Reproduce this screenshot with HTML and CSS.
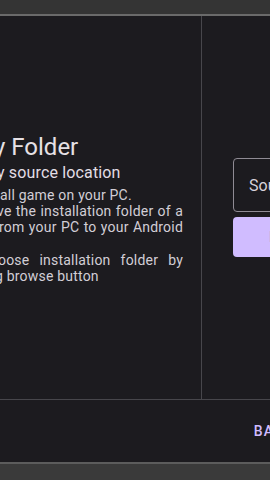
FILE: index.html
```html
<!DOCTYPE html>
<html lang="en">
  <head>
    <meta charset="UTF-8" />
    <meta name="viewport" content="width=device-width, initial-scale=1.0" />
    <title>Copy Folder</title>
    <link rel="stylesheet" href="styles.css">
  </head>
  <body>
    <div class="screen">
      <div class="status-bar"></div>
      <div class="status-edge"></div>
      <div class="main">
        <div class="info">
          <h2 class="info-title">y Folder</h2>
          <p class="info-subtitle">y source location</p>
          <div class="info-text">
            <div class="line">all game on your PC.</div>
            <div class="line justify cut-3">ve the installation folder of a</div>
            <div class="line justify cut-1">rom your PC to your Android</div>
            <div class="line blank"></div>
            <div class="line justify cut-2">oose installation folder by</div>
            <div class="line cut-5">g browse button</div>
          </div>
        </div>
        <div class="form">
          <div class="text-field">Source folder</div>
          <button type="button" class="browse-btn">Browse</button>
        </div>
      </div>
      <div class="footer">
        <button type="button" class="text-btn">Back</button>
        <button type="button" class="text-btn">Next</button>
      </div>
      <div class="nav-edge"></div>
      <div class="nav-bar"></div>
    </div>
  </body>
</html>
```

FILE: styles.css
```css
body {
  margin: 0;
  background-color: #1c1b1f;
  font-family: Roboto, "Noto Sans", sans-serif;
  overflow: hidden;
}

.screen {
  width: 400px;
  height: 480px;
  display: flex;
  flex-direction: column;
}

.status-bar {
  height: 14px;
  background-color: #343434;
}

.status-edge {
  height: 2px;
  background-color: #6a6a6a;
}

.main {
  flex: 1;
  display: flex;
  border-bottom: 1px solid #47464b;
}

.info {
  width: 202px;
  box-sizing: border-box;
  border-right: 1px solid #47464b;
  padding: 117px 18px 0 0;
}

.info-title {
  margin: 0 0 0 -6px;
  font-size: 24px;
  font-weight: 400;
  line-height: 28px;
  color: #e6e1e5;
}

.info-subtitle {
  margin: 2px 0 4px -3px;
  font-size: 16px;
  line-height: 20px;
  letter-spacing: 0.15px;
  color: #e2dee5;
}

.info-text {
  font-size: 14px;
  line-height: 16.2px;
  letter-spacing: 0.2px;
  color: #d2ced6;
}

.line {
  height: 16.2px;
  white-space: nowrap;
}

.line.justify {
  text-align: justify;
  text-align-last: justify;
  white-space: normal;
}

.cut-1 { margin-left: -1px; }
.cut-2 { margin-left: -2px; }
.cut-3 { margin-left: -3px; }
.cut-5 { margin-left: -5px; }

.form {
  flex: 1;
  padding: 0 31px;
  display: flex;
  flex-direction: column;
  justify-content: center;
  gap: 5px;
}

.text-field {
  height: 54px;
  box-sizing: border-box;
  border: 1px solid #8f8b94;
  border-radius: 4px;
  padding: 0 15px;
  display: flex;
  align-items: center;
  font-size: 16px;
  color: #d6d2da;
}

.browse-btn {
  height: 40px;
  border: none;
  border-radius: 4px;
  background-color: #d0bcff;
  color: #381e72;
  font-family: Roboto, sans-serif;
  font-size: 14px;
  font-weight: 500;
  text-transform: uppercase;
  letter-spacing: 1.25px;
}

.footer {
  height: 62px;
  display: flex;
  justify-content: flex-end;
  align-items: center;
  gap: 8px;
  padding-right: 21px;
}

.text-btn {
  background: none;
  border: none;
  padding: 8px 12px;
  color: #d0bcff;
  font-family: Roboto, sans-serif;
  font-size: 14px;
  font-weight: 500;
  text-transform: uppercase;
  letter-spacing: 1.25px;
}

.nav-edge {
  height: 2px;
  background-color: #5c5c5c;
}

.nav-bar {
  height: 16px;
  background-color: #3a3a3a;
}
```
